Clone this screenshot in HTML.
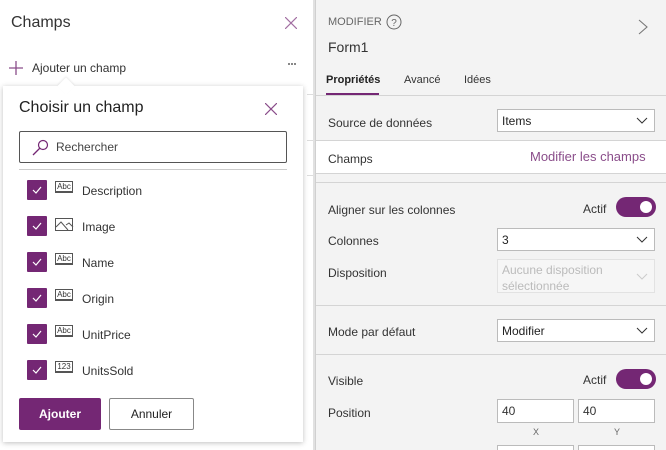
<!DOCTYPE html><html><head><style>
*{box-sizing:border-box;margin:0;padding:0}
html,body{width:666px;height:450px;overflow:hidden}
body{font-family:"Liberation Sans",sans-serif;background:#fff;position:relative;color:#333;font-size:12px}
.a{position:absolute}
.l{position:absolute;left:0;top:0;width:313px;height:450px;background:#fff}
.r{position:absolute;left:315px;top:0;width:351px;height:450px;background:#f3f3f3;border-left:1px solid #d0d0d0;overflow:hidden}
.sep{position:absolute;left:0;width:351px;height:1px;background:#d4d4d4}
.lab{position:absolute;left:12px;font-size:12px;color:#333}
.dd{position:absolute;left:181px;width:158px;height:23px;background:#fff;border:1px solid #bbb;font-size:12px;padding:4px 0 0 4px;color:#222}
.dd svg{position:absolute;right:6px;top:7px}
.tg{position:absolute;left:300px;width:40px;height:20px;border-radius:10px;background:#742774}
.tg:after{content:"";position:absolute;right:4px;top:4px;width:12px;height:12px;border-radius:6px;background:#fff}
.act{position:absolute;left:267px;font-size:12px;color:#333}
.cb{position:absolute;left:27px;width:20px;height:20px;background:#742774;border-radius:1px}
.cb svg{position:absolute;left:5px;top:6px}
.ic{position:absolute;left:55px;width:18px;height:12px;border:1px solid #555;border-bottom-width:2px;font-size:8px;line-height:9px;text-align:center;color:#333}
.it{position:absolute;left:82px;font-size:12px;color:#333}
</style></head><body>
<div class="l">
<div class="a" style="left:11px;top:14px;font-size:16px;color:#333">Champs</div>
<svg class="a" style="left:285px;top:17px" width="12" height="12"><path d="M0 0L12 12M12 0L0 12" stroke="#a26fa2" stroke-width="1.2"/></svg>
<svg class="a" style="left:9px;top:61px" width="14" height="14"><path d="M7 0V14M0 7H14" stroke="#8a4d8a" stroke-width="1.3"/></svg>
<div class="a" style="left:32px;top:61px;font-size:12px">Ajouter un champ</div>
<div class="a" style="left:288px;top:63px;width:2px;height:2px;background:#888;box-shadow:3px 0 #888,6px 0 #888"></div>
<div class="a" style="left:307px;top:94px;width:6px;height:1px;background:#ddd"></div>
<div class="a" style="left:307px;top:140px;width:6px;height:1px;background:#ddd"></div>
<div class="a" style="left:307px;top:175px;width:6px;height:1px;background:#ddd"></div>
</div>
<div class="a" style="left:313px;top:0;width:3px;height:450px;background:#e1e1e1"></div>
<div class="a" style="left:3px;top:86px;width:300px;height:356px;background:#fff;box-shadow:0 1px 5px rgba(0,0,0,.25)"></div>
<div class="a" style="left:60px;top:80px;width:12px;height:12px;background:#fff;transform:rotate(45deg);box-shadow:-1px -1px 2px rgba(0,0,0,.08)"></div>
<div class="a" style="left:19px;top:99px;font-size:16px;color:#222">Choisir un champ</div>
<svg class="a" style="left:265px;top:103px" width="12" height="12"><path d="M0 0L12 12M12 0L0 12" stroke="#8a4d8a" stroke-width="1.2"/></svg>
<div class="a" style="left:19px;top:131px;width:268px;height:32px;border:1px solid #555;border-radius:2px"></div>
<svg class="a" style="left:32px;top:139px" width="17" height="17"><circle cx="11" cy="6" r="4.5" fill="none" stroke="#742774" stroke-width="1.2"/><path d="M8 9L1 16" stroke="#742774" stroke-width="1.3"/></svg>
<div class="a" style="left:56px;top:140px;font-size:12px;color:#444">Rechercher</div>
<div class="a" style="left:19px;top:169px;width:268px;height:1px;background:#ccc"></div>
<div class="cb" style="top:180px"><svg width="10" height="8"><path d="M1 4L4 7L9 1" stroke="#fff" fill="none" stroke-width="1.2"/></svg></div><div class="ic" style="top:181px">Abc</div><div class="it" style="top:184px">Description</div>
<div class="cb" style="top:216px"><svg width="10" height="8"><path d="M1 4L4 7L9 1" stroke="#fff" fill="none" stroke-width="1.2"/></svg></div><svg class="a" style="left:55px;top:218px" width="19" height="14"><rect x=".5" y=".5" width="17" height="12" fill="none" stroke="#555"/><path d="M1 9L6 4L13 12M11 7L14 5L18 9" fill="none" stroke="#555"/></svg><div class="it" style="top:220px">Image</div>
<div class="cb" style="top:252px"><svg width="10" height="8"><path d="M1 4L4 7L9 1" stroke="#fff" fill="none" stroke-width="1.2"/></svg></div><div class="ic" style="top:253px">Abc</div><div class="it" style="top:256px">Name</div>
<div class="cb" style="top:288px"><svg width="10" height="8"><path d="M1 4L4 7L9 1" stroke="#fff" fill="none" stroke-width="1.2"/></svg></div><div class="ic" style="top:289px">Abc</div><div class="it" style="top:292px">Origin</div>
<div class="cb" style="top:324px"><svg width="10" height="8"><path d="M1 4L4 7L9 1" stroke="#fff" fill="none" stroke-width="1.2"/></svg></div><div class="ic" style="top:325px">Abc</div><div class="it" style="top:328px">UnitPrice</div>
<div class="cb" style="top:360px"><svg width="10" height="8"><path d="M1 4L4 7L9 1" stroke="#fff" fill="none" stroke-width="1.2"/></svg></div><div class="ic" style="top:361px">123</div><div class="it" style="top:364px">UnitsSold</div>
<div class="a" style="left:19px;top:398px;width:82px;height:32px;background:#742774;border-radius:2px;color:#fff;font-weight:bold;font-size:12px;text-align:center;line-height:32px">Ajouter</div>
<div class="a" style="left:109px;top:398px;width:85px;height:32px;border:1px solid #888;border-radius:2px;color:#222;font-size:12px;text-align:center;line-height:30px">Annuler</div>

<div class="r">
<div class="a" style="left:12px;top:16px;font-size:11px;color:#666">MODIFIER</div>
<svg class="a" style="left:70px;top:14px" width="16" height="16"><circle cx="8" cy="8" r="7" fill="none" stroke="#666"/><text x="8" y="12" font-size="10" text-anchor="middle" fill="#666" font-family="Liberation Sans">?</text></svg>
<svg class="a" style="left:322px;top:19px" width="10" height="16"><path d="M1 1L9 8L1 15" fill="none" stroke="#777" stroke-width="1.1"/></svg>
<div class="a" style="left:12px;top:39px;font-size:14px;color:#333">Form1</div>
<div class="a" style="left:10px;top:74px;font-size:11px;font-weight:bold;color:#222">Propriétés</div>
<div class="a" style="left:10px;top:93px;width:53px;height:2px;background:#742774"></div>
<div class="a" style="left:88px;top:74px;font-size:11px;color:#333">Avancé</div>
<div class="a" style="left:148px;top:74px;font-size:11px;color:#333">Idées</div>
<div class="sep" style="top:95px"></div>
<div class="lab" style="top:116px">Source de données</div>
<div class="dd" style="top:109px">Items<svg width="12" height="8"><path d="M1 1L6 6L11 1" fill="none" stroke="#333"/></svg></div>
<div class="sep" style="top:140px"></div>
<div class="a" style="left:0;top:141px;width:351px;height:32px;background:#fff"></div>
<div class="lab" style="top:152px">Champs</div>
<div class="a" style="left:214px;top:149px;font-size:13px;color:#8a4d8a">Modifier les champs</div>
<div class="sep" style="top:173px"></div>
<div class="sep" style="top:182px"></div>
<div class="lab" style="top:203px">Aligner sur les colonnes</div>
<div class="act" style="top:202px">Actif</div><div class="tg" style="top:197px"></div>
<div class="lab" style="top:234px">Colonnes</div>
<div class="dd" style="top:228px">3<svg width="12" height="8"><path d="M1 1L6 6L11 1" fill="none" stroke="#333"/></svg></div>
<div class="lab" style="top:266px">Disposition</div>
<div class="a" style="left:181px;top:259px;width:158px;height:34px;background:#f6f6f6;border:1px solid #e2e2e2;color:#bbb;font-size:12px;padding:2px 0 0 4px;line-height:16px">Aucune disposition<br>sélectionnée<svg class="a" style="right:6px;top:13px" width="12" height="8"><path d="M1 1L6 6L11 1" fill="none" stroke="#ccc"/></svg></div>
<div class="sep" style="top:305px"></div>
<div class="lab" style="top:325px">Mode par défaut</div>
<div class="dd" style="top:319px">Modifier<svg width="12" height="8"><path d="M1 1L6 6L11 1" fill="none" stroke="#333"/></svg></div>
<div class="sep" style="top:354px"></div>
<div class="lab" style="top:374px">Visible</div>
<div class="act" style="top:373px">Actif</div><div class="tg" style="top:369px"></div>
<div class="lab" style="top:406px">Position</div>
<div class="a" style="left:181px;top:399px;width:77px;height:24px;background:#fff;border:1px solid #bbb;padding:4px 0 0 4px">40</div>
<div class="a" style="left:262px;top:399px;width:77px;height:24px;background:#fff;border:1px solid #bbb;padding:4px 0 0 4px">40</div>
<div class="a" style="left:217px;top:427px;font-size:9px;color:#666">X</div>
<div class="a" style="left:298px;top:427px;font-size:9px;color:#666">Y</div>
<div class="a" style="left:181px;top:445px;width:77px;height:24px;background:#fff;border:1px solid #bbb"></div>
<div class="a" style="left:262px;top:445px;width:77px;height:24px;background:#fff;border:1px solid #bbb"></div>
</div>
</body></html>
